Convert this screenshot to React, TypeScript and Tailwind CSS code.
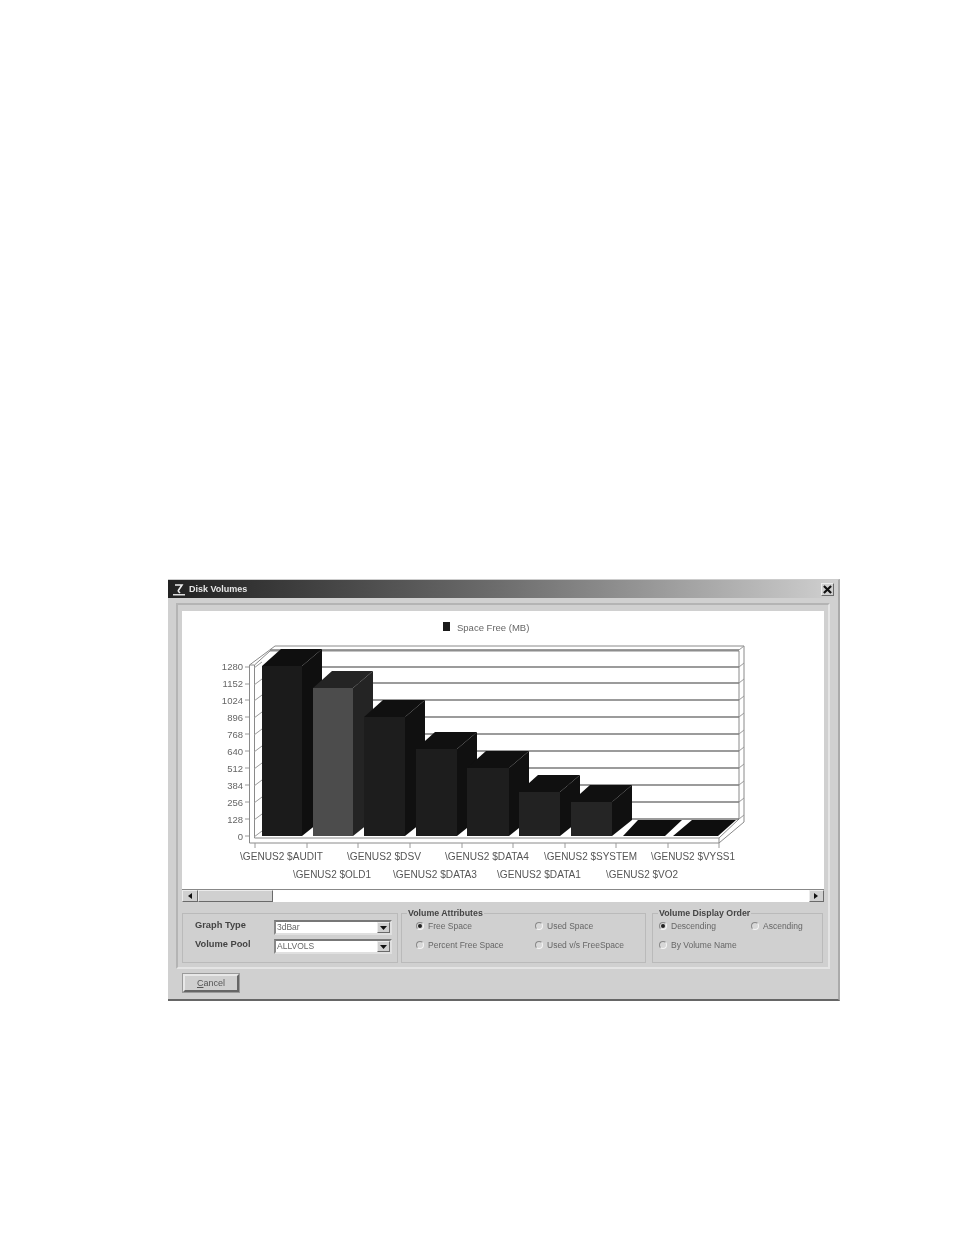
const font = "font-['Liberation_Sans',Arial,sans-serif]";
const raised = 'border border-t-[#ececec] border-l-[#ececec] border-r-[#6a6a6a] border-b-[#6a6a6a] bg-[#d0d0d0]';
const sunken = 'border-2 border-t-[#777] border-l-[#888] border-r-[#e0e0e0] border-b-[#e0e0e0] bg-white';

const gridLines = [650, 667, 683, 700, 717, 734, 751, 768, 785, 802, 819];
const yLabels = ['1280', '1152', '1024', '896', '768', '640', '512', '384', '256', '128', '0'];
const xTicks = [255, 307, 358, 410, 462, 513, 565, 616, 668, 719];

const bars = [
  { x: 262, r: 302, top: 666, front: '#1b1b1b', side: '#0f0f0f', cap: '#0f0f0f' },
  { x: 313, r: 353, top: 688, front: '#4c4c4c', side: '#242424', cap: '#242424' },
  { x: 364, r: 405, top: 717, front: '#1d1d1d', side: '#101010', cap: '#101010' },
  { x: 416, r: 457, top: 749, front: '#1d1d1d', side: '#101010', cap: '#101010' },
  { x: 467, r: 509, top: 768, front: '#1e1e1e', side: '#101010', cap: '#101010' },
  { x: 519, r: 560, top: 792, front: '#222222', side: '#101010', cap: '#101010' },
  { x: 571, r: 612, top: 802, front: '#252525', side: '#101010', cap: '#101010' },
];

const xLabels = [
  { x: 240, y: 860, w: 83, t: '\\GENUS2 $AUDIT' },
  { x: 347, y: 860, w: 74, t: '\\GENUS2 $DSV' },
  { x: 445, y: 860, w: 84, t: '\\GENUS2 $DATA4' },
  { x: 544, y: 860, w: 93, t: '\\GENUS2 $SYSTEM' },
  { x: 651, y: 860, w: 84, t: '\\GENUS2 $VYSS1' },
  { x: 293, y: 878, w: 78, t: '\\GENUS2 $OLD1' },
  { x: 393, y: 878, w: 84, t: '\\GENUS2 $DATA3' },
  { x: 497, y: 878, w: 84, t: '\\GENUS2 $DATA1' },
  { x: 606, y: 878, w: 72, t: '\\GENUS2 $VO2' },
];

function Chart() {
  return (
    <svg viewBox="182 611 642 278" className="block h-[278px] w-[642px]" fontFamily="Liberation Sans, Arial, sans-serif">
      <rect x="443" y="622" width="7" height="9" fill="#1a1a1a" />
      <text x="457" y="630.5" fontSize="9.5" fill="#666">Space Free (MB)</text>

      {/* walls */}
      <g fill="none" stroke="#8a8a8a" strokeWidth="1">
        <path d="M249.5 665 L275 646 H744 V822 L719 843" />
        <path d="M254.5 665 L270 651 H739 V819" />
        <path d="M249.5 665 V843 H719 V838 L739 819" />
        <path d="M254.5 665 V838 H719" />
        <path d="M249.5 665 H254.5" />
      </g>
      <g stroke="#7a7a7a" strokeWidth="1.3">
        {gridLines.map((y) => (
          <line key={y} x1="270" x2="739" y1={y} y2={y} />
        ))}
      </g>
      <g stroke="#9a9a9a" strokeWidth="1">
        {gridLines.map((y) => (
          <g key={y}>
            <line x1="739" x2="744" y1={y} y2={y - 4} />
            <line x1="245" x2="249" y1={y + 17} y2={y + 17} />
            <line x1="254" x2="262" y1={y + 18} y2={y + 12} />
          </g>
        ))}
        {xTicks.map((x) => (
          <line key={x} x1={x} x2={x} y1="843" y2="848" />
        ))}
      </g>

      {/* floor bars */}
      <polygon points="638,820 682,820 665,836 623,836" fill="#0e0e0e" />
      <polygon points="692,820 736,820 718,836 673,836" fill="#0e0e0e" />

      {/* bars, back to front so each one covers the side of the last */}
      {bars.map((b) => (
        <g key={b.x}>
          <polygon points={`${b.x},${b.top} ${b.x + 19},${b.top - 17} ${b.r + 20},${b.top - 17} ${b.r},${b.top}`} fill={b.cap} />
          <polygon points={`${b.r},${b.top} ${b.r + 20},${b.top - 17} ${b.r + 20},820 ${b.r},836`} fill={b.side} />
          <rect x={b.x} y={b.top} width={b.r - b.x} height={836 - b.top} fill={b.front} />
        </g>
      ))}

      <g fontSize="9.5" fill="#666" textAnchor="end">
        {yLabels.map((l, i) => (
          <text key={l} x="243" y={669.5 + i * 17}>{l}</text>
        ))}
      </g>
      <g fontSize="10" fill="#555">
        {xLabels.map((l) => (
          <text key={l.t} x={l.x} y={l.y} textLength={l.w} lengthAdjust="spacingAndGlyphs">{l.t}</text>
        ))}
      </g>
    </svg>
  );
}

function Arrow({ dir }: { dir: 'left' | 'right' | 'down' }) {
  const points = dir === 'left' ? '5,0 5,6 1,3' : dir === 'right' ? '1,0 1,6 5,3' : '0,1 7,1 3.5,5';
  return (
    <svg viewBox="0 0 7 6" className="h-[6px] w-[7px]">
      <polygon points={points} fill="#111" />
    </svg>
  );
}

function Combo({ value }: { value: string }) {
  return (
    <div className={`flex h-[15px] w-[118px] items-center justify-between ${sunken}`}>
      <span className="pl-[1px] text-[8.5px] leading-none text-[#666]">{value}</span>
      <div className={`flex h-[11px] w-[13px] items-center justify-center ${raised}`}>
        <Arrow dir="down" />
      </div>
    </div>
  );
}

function Radio({ label, checked, className }: { label: string; checked?: boolean; className?: string }) {
  return (
    <div className={`flex items-center gap-[4px] ${className ?? ''}`}>
      <span className="flex size-[8px] items-center justify-center rounded-full border border-t-[#888] border-l-[#888] border-r-[#f4f4f4] border-b-[#f4f4f4] bg-[#d8d8d8]">
        {checked && <span className="size-[4px] rounded-full bg-[#222]" />}
      </span>
      <span className="whitespace-nowrap text-[8.5px] leading-none text-[#666]">{label}</span>
    </div>
  );
}

function Group({ legend, className, children }: { legend?: string; className: string; children: React.ReactNode }) {
  return (
    <div className={`relative h-[50px] border border-[#bababa] ${className}`}>
      {legend && (
        <span className="absolute left-[5px] top-[-6px] bg-[#d0d0d0] px-[1px] text-[8.8px] font-bold leading-[11px] text-[#444]">
          {legend}
        </span>
      )}
      {children}
    </div>
  );
}

export default function App() {
  return (
    <div className={`min-h-[1235px] bg-white pl-[168px] pt-[579px] ${font}`}>
      <div className="flex h-[422px] w-[672px] flex-col border-b-2 border-r-2 border-t border-b-[#666] border-r-[#aaa] border-t-[#ccc] bg-[#d0d0d0] blur-[0.7px]">
        <div className="flex h-[18px] items-center justify-between bg-gradient-to-r from-[#222] via-[#6e6e6e] to-[#d0d0d0] pl-[4px] pr-[4px]">
          <div className="flex items-center gap-[3px]">
            <svg viewBox="0 0 14 13" className="h-[13px] w-[14px]">
              <path d="M3 2 H10 L6 8 M6 8 L8 10" stroke="#eee" strokeWidth="1.6" fill="none" />
              <rect x="1" y="11" width="12" height="1.5" fill="#ddd" />
            </svg>
            <span className="text-[9px] font-bold leading-none text-[#e6e6e6]">Disk Volumes</span>
          </div>
          <div className={`flex size-[13px] items-center justify-center ${raised}`}>
            <svg viewBox="0 0 10 10" className="size-[9px]">
              <path d="M1 1 L9 9 M9 1 L1 9" stroke="#111" strokeWidth="2.4" />
            </svg>
          </div>
        </div>

        <div className="ml-[8px] mr-[8px] mt-[5px] h-[366px] border-2 border-b-[#e4e4e4] border-l-[#b4b4b4] border-r-[#e4e4e4] border-t-[#b4b4b4] pl-[4px] pt-[6px]">
          <div className="w-[642px] bg-white">
            <Chart />
          </div>
          <div className="flex h-[13px] w-[642px] border-t border-[#888] bg-white">
            <div className={`flex w-[16px] items-center justify-center ${raised}`}>
              <Arrow dir="left" />
            </div>
            <div className={`w-[75px] ${raised}`} />
            <div className="flex-1" />
            <div className={`flex w-[15px] items-center justify-center ${raised}`}>
              <Arrow dir="right" />
            </div>
          </div>

          <div className="mt-[11px] flex w-[642px] gap-[3px]">
            <Group className="w-[216px]">
              <div className="grid grid-cols-[79px_118px] items-center gap-y-[4px] pl-[12px] pt-[6px]">
                <span className="mb-[3px] text-[9.3px] font-bold leading-none text-[#444]">Graph Type</span>
                <Combo value="3dBar" />
                <span className="mb-[3px] text-[9.3px] font-bold leading-none text-[#444]">Volume Pool</span>
                <Combo value="ALLVOLS" />
              </div>
            </Group>
            <Group legend="Volume Attributes" className="w-[245px]">
              <div className="grid grid-cols-[119px_1fr] gap-y-[10px] pl-[14px] pt-[8px]">
                <Radio label="Free Space" checked />
                <Radio label="Used Space" />
                <Radio label="Percent Free Space" />
                <Radio label="Used v/s FreeSpace" />
              </div>
            </Group>
            <Group legend="Volume Display Order" className="ml-[3px] w-[171px]">
              <div className="grid grid-cols-[92px_1fr] gap-y-[10px] pl-[6px] pt-[8px]">
                <Radio label="Descending" checked />
                <Radio label="Ascending" />
                <Radio label="By Volume Name" />
              </div>
            </Group>
          </div>
        </div>

        <div className="ml-[15px] mt-[5px]">
          <div className="flex h-[18px] w-[56px] items-center justify-center border-2 border-b-[#666] border-l-[#e8e8e8] border-r-[#666] border-t-[#e8e8e8] bg-[#d0d0d0] outline outline-1 outline-[#9a9a9a]">
            <span className="text-[9px] leading-none text-[#555]"><span className="underline">C</span>ancel</span>
          </div>
        </div>
      </div>
    </div>
  );
}
